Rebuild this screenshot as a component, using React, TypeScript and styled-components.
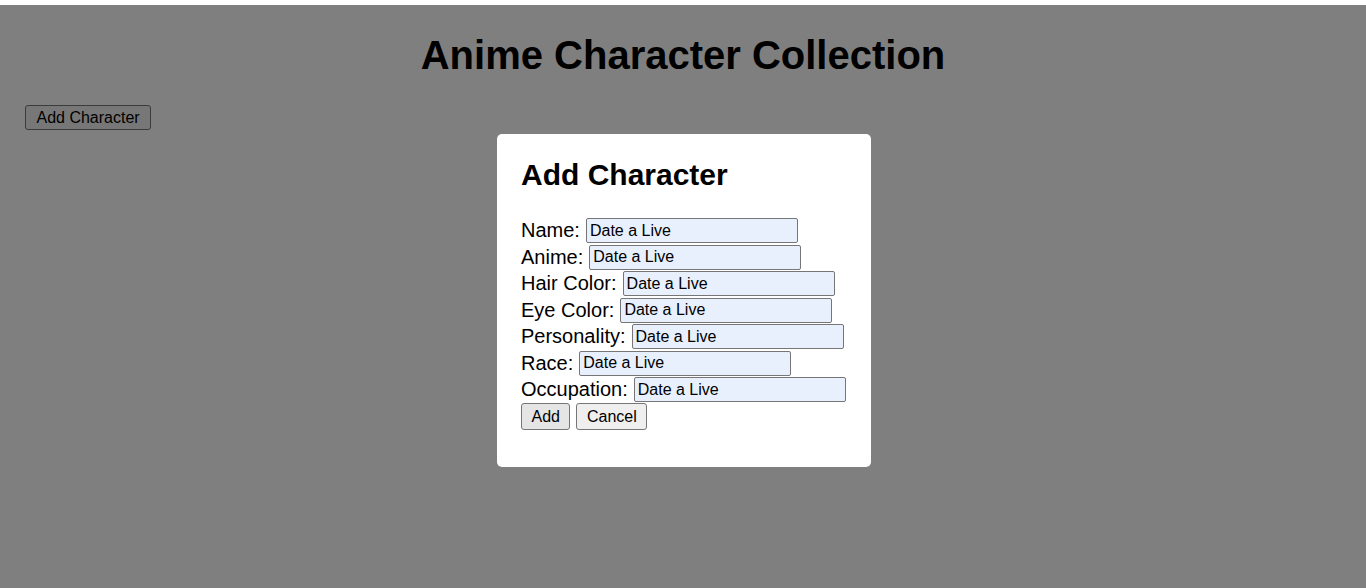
import React from "react";
import styled, { createGlobalStyle } from "styled-components";

const GlobalStyle = createGlobalStyle`
  html, body {
    margin: 0;
    padding: 0;
    background: #ffffff;
    font-family: "Liberation Sans", Arial, sans-serif;
  }
`;

const Page = styled.div`
  padding: 32px 25px;
  color: #000;
`;

const Title = styled.h1`
  margin: 0 0 27px;
  font-size: 40px;
  font-weight: bold;
  text-align: center;
  line-height: 46px;
`;

const PlainButton = styled.button<{ $pad?: number; $bg?: string }>`
  font-family: "Liberation Sans", Arial, sans-serif;
  font-size: 16px;
  line-height: 19px;
  padding: ${(p) => p.$pad ?? 2}px 9.5px;
  border: 1px solid #767676;
  border-radius: 3px;
  background: ${(p) => p.$bg ?? "#efefef"};
  color: #000;
`;

const TopButton = styled(PlainButton)`
  padding: 2px 10.5px;
`;

const Overlay = styled.div`
  position: fixed;
  top: 5px;
  left: 0;
  right: 0;
  bottom: 0;
  background: rgba(0, 0, 0, 0.5);
  display: flex;
  justify-content: center;
  align-items: flex-start;
  padding-top: 129px;
  padding-left: 2px;
`;

const Modal = styled.div`
  width: 374px;
  box-sizing: border-box;
  background: #ffffff;
  border-radius: 5px;
  padding: 24px 24px 36.5px;
`;

const ModalTitle = styled.h2`
  margin: 0 0 25px;
  font-size: 30px;
  font-weight: bold;
  line-height: 34.5px;
`;

const Form = styled.form`
  display: flex;
  flex-direction: column;
`;

const Row = styled.div`
  display: flex;
  align-items: center;
  gap: 6px;
  height: 26.5px;
`;

const Label = styled.label`
  font-size: 20px;
  line-height: 23px;
`;

const Input = styled.input`
  width: 212px;
  height: 25px;
  box-sizing: border-box;
  padding: 0 3px;
  border: 1px solid #767676;
  border-radius: 2px;
  background: #e8f0fe;
  font-family: "Liberation Sans", Arial, sans-serif;
  font-size: 16px;
  color: #000;
`;

const Actions = styled.div`
  display: flex;
  gap: 6px;
`;

const fields = [
  "Name",
  "Anime",
  "Hair Color",
  "Eye Color",
  "Personality",
  "Race",
  "Occupation",
];

export default function App() {
  return (
    <>
      <GlobalStyle />
      <Page>
        <Title>Anime Character Collection</Title>
        <TopButton>Add Character</TopButton>
      </Page>
      <Overlay>
        <Modal>
          <ModalTitle>Add Character</ModalTitle>
          <Form onSubmit={(e) => e.preventDefault()}>
            {fields.map((f) => (
              <Row key={f}>
                <Label>{f}:</Label>
                <Input defaultValue="Date a Live" />
              </Row>
            ))}
            <Actions>
              <PlainButton type="submit" $pad={3} $bg="#e5e5e5">
                Add
              </PlainButton>
              <PlainButton type="button" $pad={3}>
                Cancel
              </PlainButton>
            </Actions>
          </Form>
        </Modal>
      </Overlay>
    </>
  );
}
